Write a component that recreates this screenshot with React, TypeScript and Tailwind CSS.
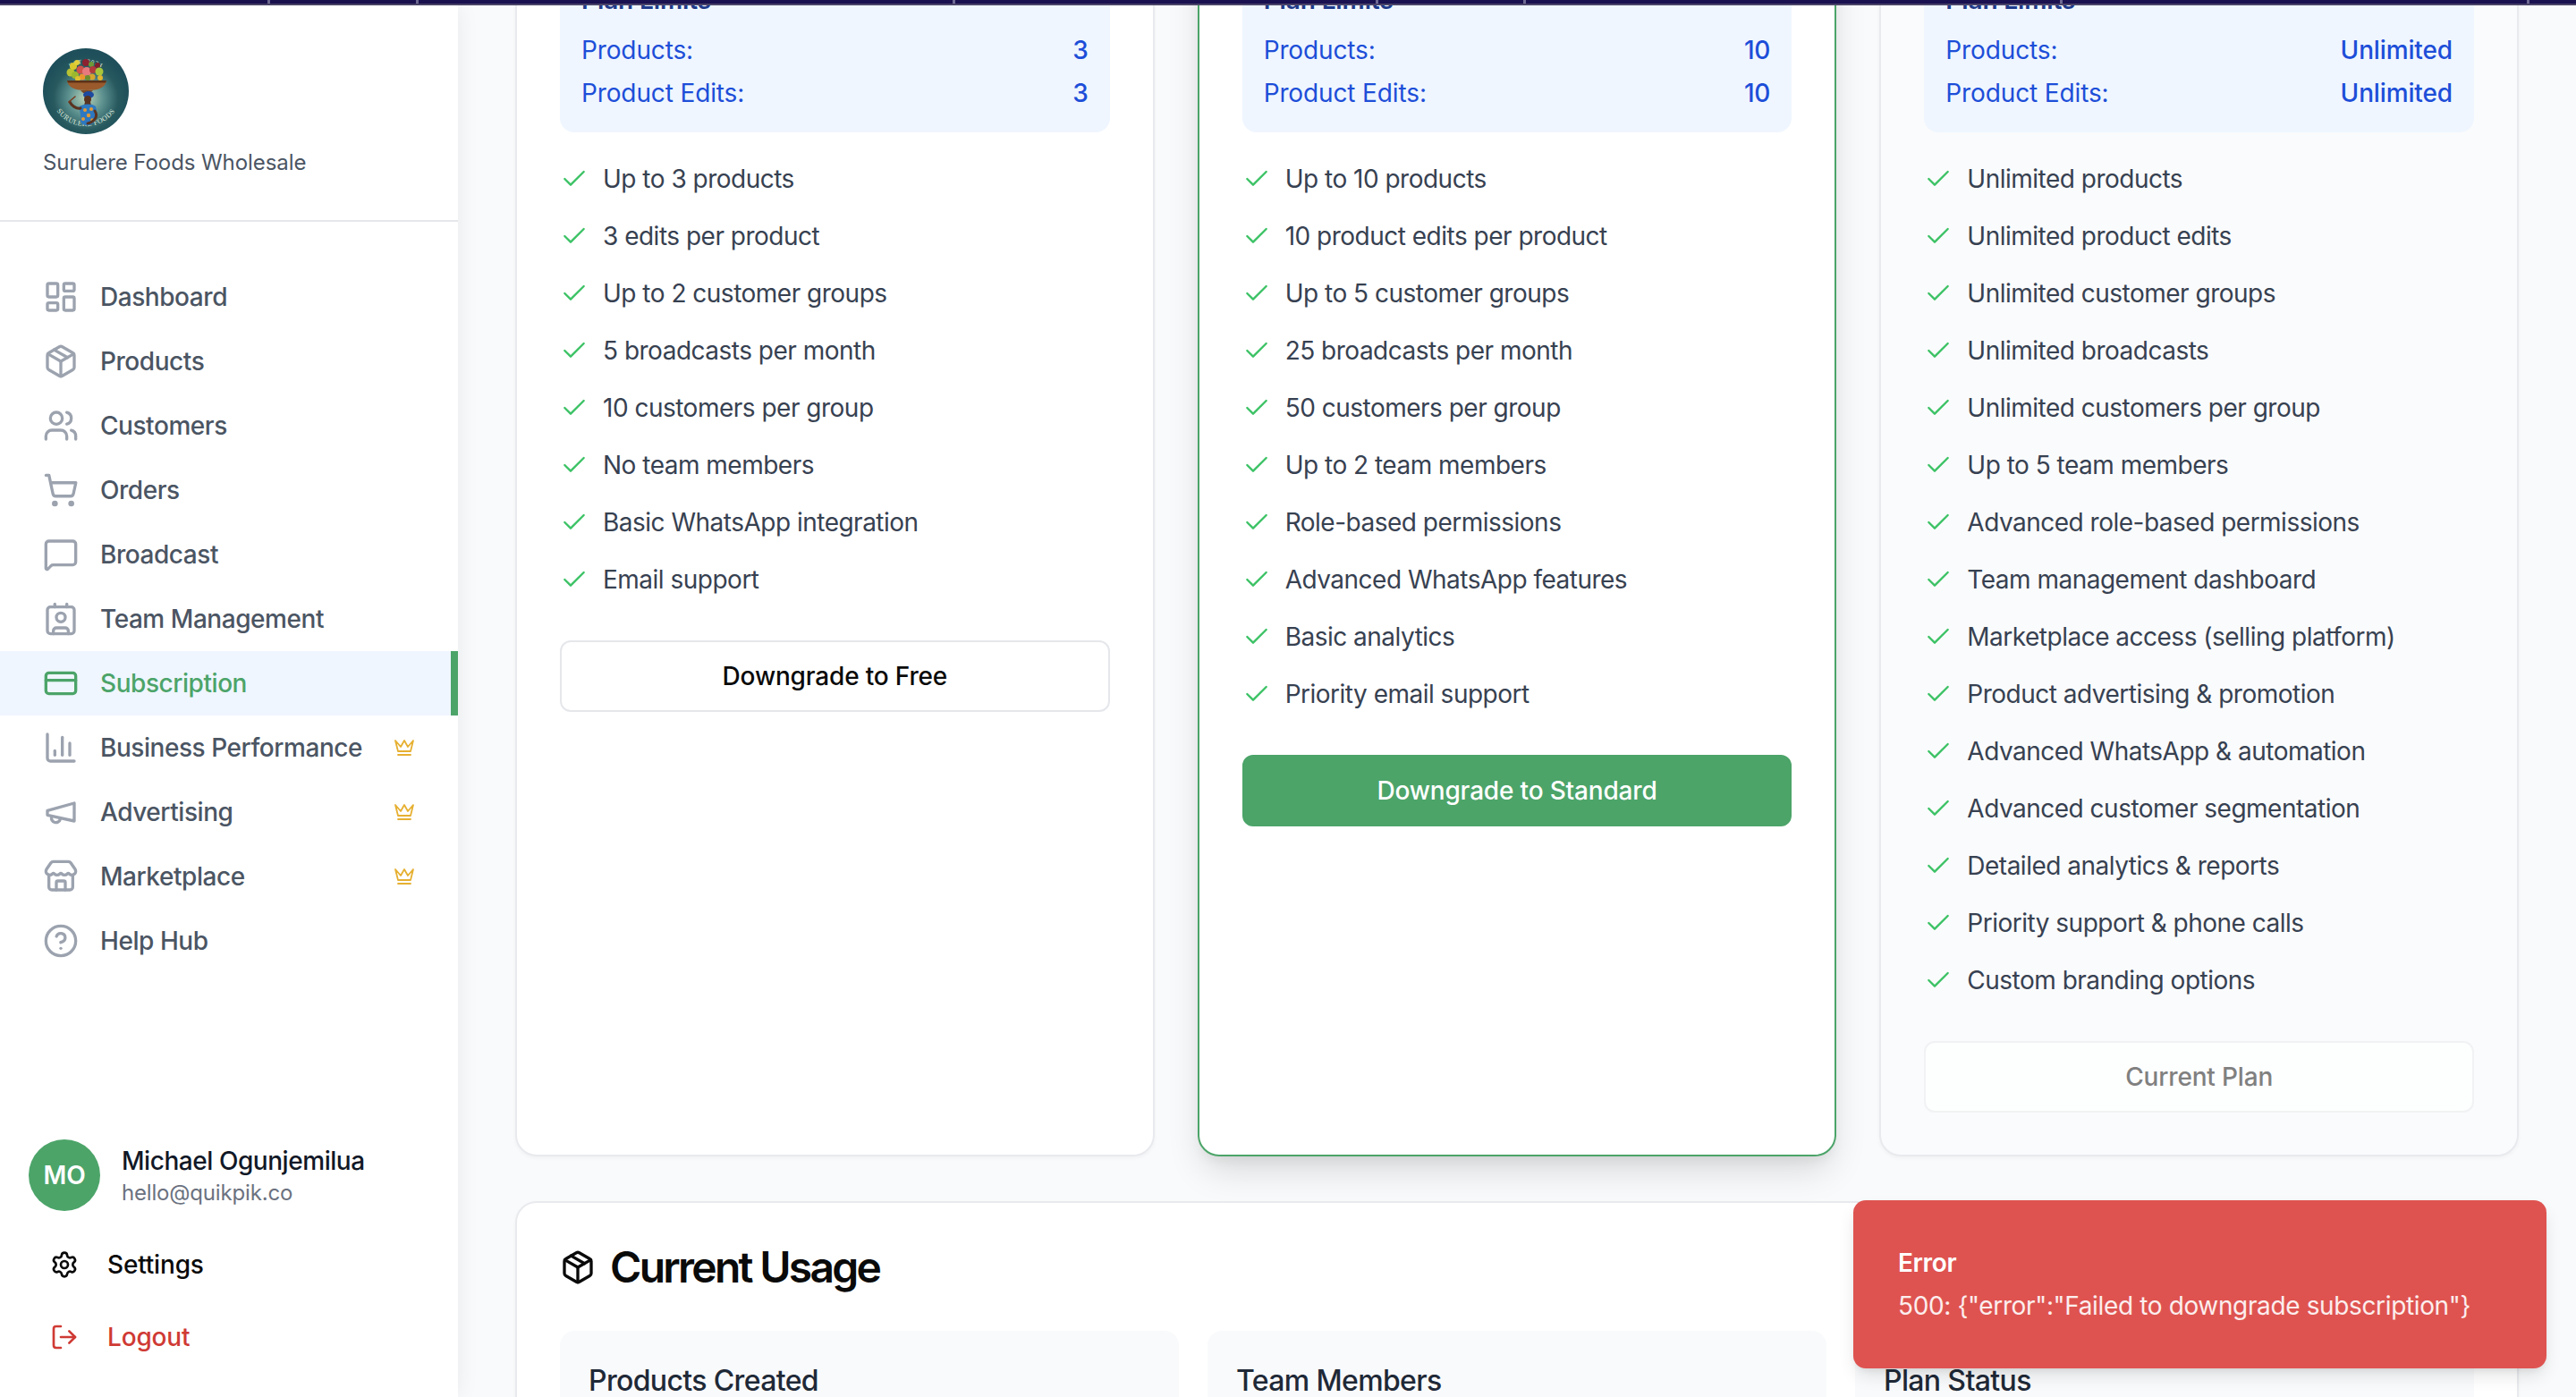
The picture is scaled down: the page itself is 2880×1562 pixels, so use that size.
import React from "react";
import {
  LayoutDashboard,
  Package,
  Users,
  ShoppingCart,
  MessageSquare,
  Contact,
  CreditCard,
  ChartColumn,
  Store,
  CircleHelp,
  Check,
  Settings,
  LogOut,
} from "lucide-react";

function Megaphone({ className }: { className?: string }) {
  return (
    <svg viewBox="0 0 24 24" fill="none" stroke="currentColor" strokeWidth="2" strokeLinecap="round" strokeLinejoin="round" className={className}>
      <path d="m3 11 18-5v12L3 14v-3z" />
      <path d="M11.6 16.8a3 3 0 1 1-5.8-1.6" />
    </svg>
  );
}

function Crown({ className }: { className?: string }) {
  return (
    <svg viewBox="0 0 24 24" fill="none" stroke="currentColor" strokeWidth="1.8" strokeLinecap="round" strokeLinejoin="round" className={className}>
      <path d="m2 4 3 12h14l3-12-6 7-4-7-4 7-6-7zm3 16h14" />
    </svg>
  );
}

function Logo() {
  const fruits: [number, number, number, string][] = [
    [31, 27, 4.5, "#b7c332"], [34, 20, 4, "#d8c82e"], [38, 16, 3, "#e2cf3c"], [36, 30, 4, "#9cb82e"],
    [42, 24, 4.5, "#d0524a"], [44, 32, 3.5, "#e9962f"], [48, 16, 4, "#8c2130"], [49, 26, 5, "#e77a7e"],
    [54, 18, 3, "#6f9a37"], [56, 24, 4, "#b23a3c"], [55, 32, 3.5, "#d8a52d"], [61, 19, 3, "#7d1f2c"],
    [63, 26, 4.5, "#a9c63a"], [64, 33, 3, "#e0b52f"], [50, 33, 3, "#6d8e2d"], [39, 34, 3, "#e0c030"],
  ];
  return (
    <svg viewBox="0 0 96 96" className="w-[96px] h-[96px] shrink-0 block">
      <defs>
        <radialGradient id="logobg" cx="50%" cy="58%" r="52%">
          <stop offset="0%" stopColor="#b9d3b8" />
          <stop offset="38%" stopColor="#5e9290" />
          <stop offset="72%" stopColor="#27595f" />
          <stop offset="100%" stopColor="#1e4f5a" />
        </radialGradient>
        <path id="logotop" d="M 18 40 A 31 31 0 0 1 78 40" />
        <path id="logobottom" d="M 9 56 A 40 40 0 0 0 87 56" />
      </defs>
      <circle cx="48" cy="48" r="48" fill="url(#logobg)" />
      <text fontFamily="Liberation Serif, serif" fontSize="7" fill="#dfe9dc" letterSpacing="0.8">
        <textPath href="#logotop" startOffset="50%" textAnchor="middle">EST. 2024</textPath>
      </text>
      <text fontFamily="Liberation Serif, serif" fontSize="8" fill="#dfe9dc" letterSpacing="0.5">
        <textPath href="#logobottom" startOffset="50%" textAnchor="middle">SURULERE FOODS</textPath>
      </text>
      {fruits.map(([x, y, r, c], i) => (
        <circle key={i} cx={x} cy={y} r={r} fill={c} />
      ))}
      <path d="M27 36 H71 C70 44 62 47 49 47 C36 47 28 44 27 36 Z" fill="#9a5a2c" />
      <path d="M27 36 H71 L70 38.5 H28 Z" fill="#5c3218" />
      <path d="M42 47 H56 L53 50 H45 Z" fill="#7a4a25" />
      <ellipse cx="51" cy="52" rx="6" ry="4" fill="#1d4aa0" />
      <circle cx="50" cy="57" r="4" fill="#5a3320" />
      <path d="M47 60 H53 L54 64 H46 Z" fill="#5a3320" />
      <path d="M40 66 C43 62 55 61 59 65 C61 72 60 78 56 84 C50 88 44 86 42 82 C43 76 42 72 40 66 Z" fill="#2d78c0" />
      <circle cx="47" cy="69" r="2" fill="#e39a34" />
      <circle cx="54" cy="68" r="2" fill="#e39a34" />
      <circle cx="51" cy="75" r="2.2" fill="#e39a34" />
      <circle cx="45" cy="79" r="2" fill="#e39a34" />
      <circle cx="55" cy="80" r="1.8" fill="#e39a34" />
      <path d="M42 67 C37 68 32 64 30 60" stroke="#5a3320" strokeWidth="3" fill="none" strokeLinecap="round" />
      <path d="M29 60 L36 54" stroke="#7a3b20" strokeWidth="1.6" fill="none" strokeLinecap="round" />
      <path d="M58 70 C62 76 58 82 50 84" stroke="#5a3320" strokeWidth="3" fill="none" strokeLinecap="round" />
    </svg>
  );
}

const nav = [
  { label: "Dashboard", Icon: LayoutDashboard },
  { label: "Products", Icon: Package },
  { label: "Customers", Icon: Users },
  { label: "Orders", Icon: ShoppingCart },
  { label: "Broadcast", Icon: MessageSquare },
  { label: "Team Management", Icon: Contact },
  { label: "Subscription", Icon: CreditCard, active: true },
  { label: "Business Performance", Icon: ChartColumn, crown: true },
  { label: "Advertising", Icon: Megaphone, crown: true },
  { label: "Marketplace", Icon: Store, crown: true },
  { label: "Help Hub", Icon: CircleHelp },
];

const marks = [299, 465, 1065, 1538, 1703, 2303, 2825];

function Sidebar() {
  return (
    <aside className="relative z-10 w-[512px] shrink-0 h-full bg-white flex flex-col shadow-[0_0_24px_rgba(0,0,0,0.07)]">
      <div className="px-[48px] pt-[48px] pb-[48px] border-b-2 border-[#e5e7eb]">
        <Logo />
        <p className="mt-[16px] text-[24px] leading-[32px] tracking-[-0.003em] text-[#4b5563]">Surulere Foods Wholesale</p>
      </div>
      <nav className="pt-[48px] flex-1">
        {nav.map(({ label, Icon, active, crown }) => (
          <div
            key={label}
            className={
              active
                ? "h-[72px] flex items-center pl-[48px] pr-[40px] bg-[#eff6ff] border-r-[8px] border-[#4ca469] text-[#4ca469]"
                : "h-[72px] flex items-center pl-[48px] pr-[48px] text-[#4b5563]"
            }
          >
            <Icon className={active ? "w-[40px] h-[40px] text-[#4ca469] shrink-0" : "w-[40px] h-[40px] text-[#9ca3af] shrink-0"} />
            <span className="ml-[24px] text-[28px] leading-[40px] font-medium tracking-[-0.016em] flex-1">{label}</span>
            {crown && <Crown className="w-[24px] h-[24px] text-[#e6b032] shrink-0" />}
          </div>
        ))}
      </nav>
      <div className="px-[32px] pb-[27px]">
        <div className="flex items-center gap-[24px] mb-[20px]">
          <div className="w-[80px] h-[80px] rounded-full bg-[#4ca469] flex items-center justify-center text-white text-[28px] font-semibold">MO</div>
          <div>
            <p className="text-[28px] leading-[40px] font-medium tracking-[-0.016em] text-[#111827]">Michael Ogunjemilua</p>
            <p className="text-[24px] leading-[32px] text-[#6b7280]">hello@quikpik.co</p>
          </div>
        </div>
        <div className="h-[80px] pl-[24px] flex items-center gap-[32px] text-[#0a0a0a] text-[28px] font-medium mb-px">
          <Settings className="w-[32px] h-[32px]" />
          <span>Settings</span>
        </div>
        <div className="h-[80px] pl-[24px] flex items-center gap-[32px] text-[#cf3a34] text-[28px] font-medium">
          <LogOut className="w-[32px] h-[32px]" />
          <span>Logout</span>
        </div>
      </div>
    </aside>
  );
}

const plans = [
  {
    products: "3",
    edits: "3",
    features: ["Up to 3 products", "3 edits per product", "Up to 2 customer groups", "5 broadcasts per month", "10 customers per group", "No team members", "Basic WhatsApp integration", "Email support"],
    button: "Downgrade to Free",
    kind: "outline",
  },
  {
    products: "10",
    edits: "10",
    features: ["Up to 10 products", "10 product edits per product", "Up to 5 customer groups", "25 broadcasts per month", "50 customers per group", "Up to 2 team members", "Role-based permissions", "Advanced WhatsApp features", "Basic analytics", "Priority email support"],
    button: "Downgrade to Standard",
    kind: "green",
  },
  {
    products: "Unlimited",
    edits: "Unlimited",
    features: ["Unlimited products", "Unlimited product edits", "Unlimited customer groups", "Unlimited broadcasts", "Unlimited customers per group", "Up to 5 team members", "Advanced role-based permissions", "Team management dashboard", "Marketplace access (selling platform)", "Product advertising & promotion", "Advanced WhatsApp & automation", "Advanced customer segmentation", "Detailed analytics & reports", "Priority support & phone calls", "Custom branding options"],
    button: "Current Plan",
    kind: "current",
  },
];

function PlanCard({ plan }: { plan: (typeof plans)[number] }) {
  const cardClass =
    plan.kind === "green"
      ? "rounded-[24px] border-2 border-[#4ca469] bg-white px-[48px] pt-[48px] pb-[47px] shadow-[0_20px_40px_-6px_rgba(0,0,0,0.14),0_8px_16px_-6px_rgba(0,0,0,0.08)]"
      : plan.kind === "current"
        ? "rounded-[24px] border-2 border-[#e9eaee] bg-[#fafbfc] px-[48px] pt-[48px] pb-[47px] shadow-[0_2px_4px_rgba(0,0,0,0.04)]"
        : "rounded-[24px] border-2 border-[#e9eaee] bg-white px-[48px] pt-[48px] pb-[47px] shadow-[0_2px_4px_rgba(0,0,0,0.04)]";
  const buttonClass =
    plan.kind === "green"
      ? "bg-[#4ca469] text-white border-[#4ca469]"
      : plan.kind === "current"
        ? "bg-[#fdfefe] text-[#808080] border-[#f1f2f4]"
        : "bg-white text-[#0a0a0a] border-[#e5e7eb]";
  return (
    <div className={cardClass}>
      <div className="rounded-[16px] bg-[#eff6ff] p-[24px] tracking-[-0.008em]">
        <h4 className="mb-[16px] text-[28px] leading-[40px] font-semibold text-[#1e3a8a]">Plan Limits</h4>
        <div className="flex flex-col gap-[8px] text-[28px] leading-[40px] text-[#1d4ed8]">
          <div className="flex justify-between">
            <span>Products:</span>
            <span className="font-medium">{plan.products}</span>
          </div>
          <div className="flex justify-between">
            <span>Product Edits:</span>
            <span className="font-medium">{plan.edits}</span>
          </div>
        </div>
      </div>
      <ul className="mt-[32px] flex flex-col gap-[24px]">
        {plan.features.map((f) => (
          <li key={f} className="flex items-center gap-[16px] text-[28px] leading-[40px] tracking-[-0.018em] text-[#374151]">
            <Check strokeWidth={1.8} className="w-[32px] h-[32px] text-[#3cc265] shrink-0" />
            <span>{f}</span>
          </li>
        ))}
      </ul>
      <div className={`mt-[48px] h-[80px] rounded-[12px] border-2 flex items-center justify-center text-[28px] font-medium ${buttonClass}`}>
        {plan.button}
      </div>
    </div>
  );
}

function UsageBox({ title }: { title: string }) {
  return (
    <div className="rounded-[16px] bg-[#f9fafb] p-[32px] h-[300px]">
      <h4 className="text-[32px] leading-[48px] font-medium tracking-[-0.02em] text-[#1f2937]">{title}</h4>
    </div>
  );
}

export default function App() {
  return (
    <div className="relative h-screen w-full overflow-hidden flex flex-col bg-[#f9fafb] font-[Inter,sans-serif] tracking-[-0.011em]">
      <div className="relative h-[6px] shrink-0 bg-[#1a1150] border-b-2 border-[#4a4468]">
        {marks.map((x) => (
          <span key={x} className="absolute top-0 h-[4px] w-[3px] bg-[#6f6a94]" style={{ left: x }} />
        ))}
      </div>
      <div className="flex flex-1 min-h-0">
        <Sidebar />
        <main className="flex-1 min-w-0 overflow-hidden px-[64px]">
          <div className="-mt-[100px]">
            <div className="grid grid-cols-3 gap-[48px]">
              {plans.map((p) => (
                <PlanCard key={p.button} plan={p} />
              ))}
            </div>
            <section className="mt-[50px] rounded-[24px] border-2 border-[#e9eaee] bg-white p-[48px] shadow-[0_2px_4px_rgba(0,0,0,0.04)]">
              <div className="flex items-center gap-[16px] text-[#0a0a0a]">
                <Package className="w-[40px] h-[40px]" />
                <h3 className="text-[48px] leading-[48px] font-semibold tracking-[-0.057em]">Current Usage</h3>
              </div>
              <div className="mt-[47px] grid grid-cols-3 gap-[32px]">
                <UsageBox title="Products Created" />
                <UsageBox title="Team Members" />
                <UsageBox title="Plan Status" />
              </div>
            </section>
          </div>
        </main>
      </div>
      <div className="absolute right-[33px] bottom-[32px] z-20 w-[775px] h-[188px] rounded-[14px] bg-[#de5350] px-[50px] flex flex-col justify-center gap-[8px] text-[28px] leading-[40px] tracking-[-0.013em] text-white shadow-[0_10px_20px_-3px_rgba(0,0,0,0.12),0_4px_8px_-4px_rgba(0,0,0,0.1)]">
        <p className="font-semibold">Error</p>
        <p className="text-white/90">500: {'{"error":"Failed to downgrade subscription"}'}</p>
      </div>
    </div>
  );
}
